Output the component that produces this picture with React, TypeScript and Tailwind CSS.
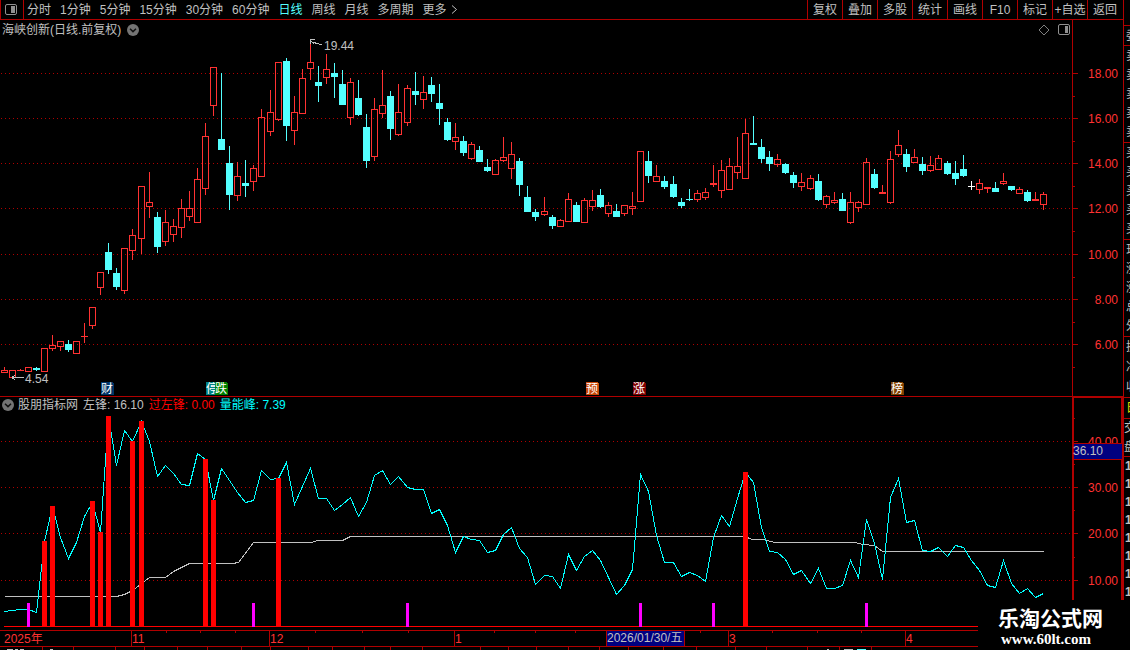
import { useState } from 'react';
import clsx from 'clsx';

type Candle = [kind: 'u' | 'd' | 'x', high: number, top: number, bottom: number, low: number];

const PERIODS = ['分时', '1分钟', '5分钟', '15分钟', '30分钟', '60分钟', '日线', '周线', '月线', '多周期'];
const TOOLS = ['复权', '叠加', '多股', '统计', '画线', 'F10', '标记', '+自选', '返回'];

// u = close above open, d = close below open, x = unchanged
const CANDLES: Candle[] = [
  ['u', 367, 370, 372, 372], ['u', 370, 370, 377, 377], ['u', 369, 370, 370, 370], ['u', 367, 367, 371, 371],
  ['d', 367, 368, 369, 370], ['u', 348, 348, 371, 371], ['u', 335, 345, 348, 350], ['u', 341, 341, 346, 350],
  ['d', 340, 344, 349, 351], ['u', 341, 341, 353, 353], ['u', 323, 336, 336, 342], ['u', 307, 307, 325, 328],
  ['u', 272, 272, 287, 294], ['d', 243, 252, 269, 273], ['d', 268, 273, 286, 289], ['u', 248, 248, 290, 293],
  ['u', 229, 235, 250, 259], ['u', 186, 186, 238, 253], ['u', 172, 202, 206, 217], ['d', 212, 217, 246, 252],
  ['u', 210, 222, 241, 245], ['u', 219, 226, 234, 241], ['u', 199, 208, 227, 237], ['u', 191, 208, 216, 220],
  ['u', 168, 179, 222, 222], ['u', 123, 136, 188, 194], ['u', 67, 67, 105, 115], ['d', 73, 139, 149, 149],
  ['d', 146, 163, 194, 209], ['u', 162, 176, 195, 200], ['d', 160, 183, 185, 196], ['u', 165, 168, 181, 190],
  ['u', 109, 117, 176, 176], ['u', 90, 112, 131, 135], ['u', 62, 62, 119, 120], ['d', 58, 61, 125, 140],
  ['u', 96, 112, 130, 144], ['u', 69, 78, 113, 113], ['u', 42, 62, 68, 79], ['d', 66, 82, 85, 101],
  ['u', 54, 69, 77, 83], ['d', 63, 73, 76, 97], ['d', 70, 84, 104, 104], ['u', 78, 82, 117, 124],
  ['d', 80, 98, 114, 115], ['d', 114, 127, 160, 167], ['u', 98, 109, 156, 160], ['u', 70, 105, 113, 117],
  ['d', 91, 96, 128, 139], ['u', 84, 112, 134, 135], ['u', 85, 88, 122, 125], ['d', 72, 91, 94, 104],
  ['u', 76, 92, 99, 108], ['d', 77, 85, 93, 101], ['d', 84, 103, 108, 124], ['d', 118, 122, 139, 140],
  ['u', 123, 137, 141, 149], ['d', 136, 141, 152, 155], ['u', 142, 144, 158, 159], ['d', 146, 150, 161, 161],
  ['d', 159, 167, 170, 171], ['u', 159, 160, 174, 174], ['u', 137, 157, 160, 161], ['u', 142, 154, 168, 178],
  ['d', 158, 161, 184, 195], ['d', 186, 197, 211, 211], ['d', 209, 212, 216, 220], ['u', 197, 211, 214, 215],
  ['d', 215, 217, 225, 228], ['u', 219, 220, 226, 226], ['u', 193, 199, 221, 221], ['d', 202, 205, 221, 221],
  ['u', 198, 200, 222, 222], ['u', 190, 200, 206, 210], ['d', 189, 195, 206, 207], ['u', 202, 205, 213, 216],
  ['d', 204, 211, 216, 216], ['u', 205, 205, 213, 215], ['u', 192, 206, 208, 214], ['u', 151, 151, 201, 201],
  ['d', 151, 161, 175, 182], ['u', 165, 176, 181, 181], ['d', 176, 181, 186, 188], ['d', 176, 184, 196, 197],
  ['d', 198, 202, 205, 207], ['d', 189, 199, 199, 200], ['u', 190, 193, 199, 201], ['u', 188, 192, 197, 199],
  ['u', 165, 183, 184, 186], ['u', 160, 170, 190, 197], ['u', 158, 166, 189, 189], ['u', 137, 166, 172, 178],
  ['u', 119, 133, 178, 178], ['d', 116, 143, 144, 144], ['d', 139, 147, 158, 162], ['d', 151, 157, 163, 170],
  ['u', 154, 159, 164, 166], ['d', 163, 164, 172, 173], ['d', 172, 175, 182, 187], ['u', 173, 182, 186, 190],
  ['u', 175, 178, 188, 189], ['d', 174, 181, 199, 200], ['u', 195, 196, 204, 207], ['u', 192, 200, 202, 203],
  ['d', 193, 199, 210, 210], ['u', 192, 202, 222, 223], ['u', 201, 202, 207, 211], ['u', 158, 162, 204, 204],
  ['d', 169, 174, 187, 188], ['u', 185, 192, 193, 193], ['u', 151, 159, 202, 203], ['u', 130, 145, 154, 156],
  ['d', 149, 154, 166, 171], ['u', 149, 157, 162, 162], ['d', 157, 164, 170, 174], ['u', 156, 165, 170, 171],
  ['u', 155, 158, 169, 169], ['d', 161, 163, 173, 174], ['d', 161, 173, 178, 184], ['d', 155, 169, 175, 176],
  ['x', 181, 186, 186, 189], ['u', 179, 183, 189, 193], ['u', 187, 187, 188, 192], ['d', 182, 188, 191, 191],
  ['u', 173, 181, 183, 184], ['d', 186, 186, 189, 190], ['u', 187, 189, 193, 193], ['d', 190, 192, 200, 201],
  ['u', 192, 199, 200, 200], ['u', 192, 194, 204, 209],
];

const ENERGY = [
  611, 610, 609, 609, 612, 541, 506, 537, 558, 542, 516, 502, 532, 416, 465, 430, 441, 421, 441, 476,
  465, 473, 484, 485, 453, 459, 500, 468, 480, 492, 502, 500, 470, 479, 478, 462, 504, 486, 468, 498,
  498, 510, 504, 497, 516, 502, 475, 470, 484, 476, 487, 489, 489, 513, 509, 525, 552, 536, 539, 540,
  552, 550, 534, 527, 548, 557, 584, 575, 576, 588, 554, 570, 556, 550, 560, 577, 594, 585, 569, 474,
  491, 535, 562, 562, 576, 572, 575, 581, 537, 515, 526, 498, 472, 482, 527, 551, 552, 559, 574, 570,
  583, 568, 588, 588, 585, 560, 577, 519, 543, 579, 497, 478, 522, 520, 550, 551, 547, 556, 545, 547,
  560, 570, 585, 587, 560, 583, 593, 588, 597, 593,
];

const AVERAGE =
  '4,596 116,596 124,594 132,590 149,577 165,577 173,571 181,567 189,563 232,563 238,562 253,542 311,542 317,540 342,540 350,536 744,536 752,539 763,539 774,542 855,542 862,544 874,545 882,551 1043,551';

const BREAKOUTS = [
  [44, 541], [52, 506], [92, 501], [100, 532], [108, 416], [132, 441],
  [141, 421], [205, 459], [213, 500], [278, 478], [745, 472],
];
const SIGNALS = [28, 253, 407, 640, 713, 866];

const PRICE_TICKS: [number, string][] = [
  [73, '18.00'], [118, '16.00'], [163, '14.00'], [208, '12.00'], [254, '10.00'], [299, '8.00'], [344, '6.00'],
];
const PRICE_MINOR = [96, 141, 186, 231, 277, 322, 367];
const ENERGY_TICKS: [number, string][] = [[441, '40.00'], [487, '30.00'], [533, '20.00'], [580, '10.00']];
const ENERGY_MINOR = [418, 464, 510, 557];

const EVENTS = [
  { x: 206, label: '停', color: '#008080' },
  { x: 215, label: '跌', color: '#008000' },
  { x: 101, label: '财', color: '#003468' },
  { x: 586, label: '预', color: '#c84808' },
  { x: 633, label: '涨', color: '#800000' },
  { x: 891, label: '榜', color: '#804000' },
];

const MONTHS: [number, string][] = [[131, '11'], [269, '12'], [454, '1'], [728, '3'], [905, '4']];
const WEEK_TICKS = [166, 200, 235, 315, 362, 408, 494, 535, 575, 700, 772, 817, 861];
const FOOTER_TICKS = [
  42, 73, 115, 144, 177, 207, 241, 270, 308, 332, 364, 390, 422, 480, 508, 536, 568, 599, 628, 663, 696, 735, 766,
  807, 839, 871,
];

const QUOTE_ROWS = [
  { height: 'h-[20px]', rows: ['委'] },
  { height: 'h-[97px]', rows: ['卖', '卖', '卖', '卖', '卖'] },
  { height: 'h-[97px]', rows: ['买', '买', '买', '买', '买'] },
  { height: 'h-[97px]', rows: ['现', '涨', '涨', '总', '外'] },
  { height: 'h-[61px]', rows: ['换', '净', '收'] },
];

const slotX = (i: number) => Math.floor(4.02 + i * 8.06);

function CandleShape({ candle, x }: { candle: Candle; x: number }) {
  const [kind, high, top, bottom, low] = candle;
  const color = kind === 'u' ? '#ff3232' : kind === 'd' ? '#54ffff' : '#ffffff';
  const hollow = kind === 'u' && bottom - top > 1;
  if (hollow) {
    return (
      <g fill={color}>
        <rect x={x} y={high} width={1} height={top - high} />
        <rect x={x} y={bottom} width={1} height={low - bottom + 1} />
        <rect x={x - 2.5} y={top + 0.5} width={6} height={bottom - top} fill="none" stroke={color} />
      </g>
    );
  }
  return (
    <g fill={color}>
      <rect x={x} y={high} width={1} height={low - high + 1} />
      <rect x={x - 3} y={top} width={7} height={bottom - top + 1} />
    </g>
  );
}

function AxisScale({ ticks, minor }: { ticks: [number, string][]; minor: number[] }) {
  return (
    <g>
      {ticks.map(([y, label]) => (
        <g key={label}>
          <line x1={1} x2={1072} y1={y + 0.5} y2={y + 0.5} stroke="#b00000" strokeDasharray="1 3" />
          <rect x={1073} y={y} width={5} height={1} fill="#b00000" />
          <text x={1118} y={y + 5} textAnchor="end" fill="#ff3232">{label}</text>
        </g>
      ))}
      {minor.map((y) => (
        <rect key={y} x={1073} y={y} width={2} height={1} fill="#b00000" />
      ))}
    </g>
  );
}

function CollapseIcon() {
  return (
    <svg className="size-3" viewBox="0 0 12 12">
      <circle cx="6" cy="6" r="6" fill="#747474" />
      <path d="M3 4.8 L6 7.6 L9 4.8" fill="none" stroke="#111" strokeWidth="1.5" />
    </svg>
  );
}

function PriceChart() {
  return (
    <section className="relative">
      <svg className="block h-auto w-full text-xs" viewBox="0 20 1123 377" shapeRendering="crispEdges">
        <AxisScale ticks={PRICE_TICKS} minor={PRICE_MINOR} />
        <rect x={1072} y={20} width={1} height={377} fill="#b00000" />
        <rect x={0} y={396} width={1123} height={1} fill="#b00000" />
        {CANDLES.map((candle, i) => (
          <CandleShape key={i} candle={candle} x={slotX(i)} />
        ))}

        {/* Highest and lowest price */}
        <g fill="none" stroke="#c0c0c0">
          <path d="M310.5 41.5 L322 45 M315 39.5 H311 L310.5 44 M311 41.5 L314 43.5" />
          <path d="M12 377.5 H24 M12 377.5 L15.5 374.5 M12 377.5 L15.5 380.5" />
        </g>
        <text x={324} y={50} fill="#c0c0c0">19.44</text>
        <text x={25} y={383} fill="#c0c0c0">4.54</text>

        {EVENTS.map((event) => (
          <g key={event.x}>
            <path d={`M${event.x} 382 h11 l2 2 v11 h-13 z`} fill={event.color} />
            <text x={event.x} y={393} fill="#fff">{event.label}</text>
          </g>
        ))}
      </svg>

      <div className="absolute inset-x-0 top-0 flex h-[19px] items-center gap-1.5 pl-0.5">
        <h1>海峡创新(日线.前复权)</h1>
        <button aria-label="展开"><CollapseIcon /></button>
        <div className="ml-auto mr-[53px] flex items-center gap-2">
          <button aria-label="标注">
            <svg className="size-3" viewBox="0 0 12 12" fill="none" stroke="#808080">
              <path d="M6 1 L11 6 L6 11 L1 6 Z" />
            </svg>
          </button>
          <button aria-label="右侧栏">
            <svg className="size-3" viewBox="0 0 12 12">
              <rect x="0.5" y="0.5" width="11" height="10" rx="1.5" fill="none" stroke="#909090" />
              <rect x="7" y="2" width="3" height="7" fill="#909090" />
            </svg>
          </button>
        </div>
      </div>
    </section>
  );
}

function EnergyChart() {
  const energyPoints = ENERGY.map((y, i) => `${slotX(i) + 0.5},${y + 0.5}`).join(' ');

  return (
    <section className="relative">
      <svg className="block h-auto w-full text-xs" viewBox="0 397 1123 253" shapeRendering="crispEdges">
        <AxisScale ticks={ENERGY_TICKS} minor={ENERGY_MINOR} />
        <path d="M1073 600 V397 H1122 V600" fill="none" stroke="#b00000" strokeWidth={2} />

        <polyline points={AVERAGE} transform="translate(0.5 0.5)" fill="none" stroke="#c0c0c0" />
        <polyline points={energyPoints} fill="none" stroke="#00ffff" />
        {BREAKOUTS.map(([x, y]) => (
          <rect key={x} x={x - 2} y={y} width={5} height={627 - y} fill="#ff0000" />
        ))}
        <rect x={4} y={626} width={974} height={1} fill="#ff0000" />
        {SIGNALS.map((x) => (
          <rect key={x} x={x - 1} y={603} width={3} height={24} fill="#ff00ff" />
        ))}

        {/* Cursor value */}
        <rect x={1074} y={443} width={48} height={17} fill="#b00000" />
        <rect x={1074} y={444} width={48} height={15} fill="#000080" />
        <text x={1073} y={455} fill="#c0c0c0">36.10</text>

        {/* Time axis */}
        <g fill="#b00000">
          <rect x={0} y={630} width={978} height={1} />
          <rect x={0} y={646} width={978} height={1} />
          {WEEK_TICKS.map((x) => <rect key={x} x={x} y={631} width={1} height={2} />)}
          {FOOTER_TICKS.map((x) => <rect key={x} x={x} y={647} width={1} height={3} />)}
        </g>
        <text x={4} y={643} fill="#ff3232">2025年</text>
        {MONTHS.map(([x, label]) => (
          <g key={x}>
            <rect x={x} y={631} width={1} height={15} fill="#b00000" />
            <text x={x + 1} y={643} fill="#ff3232">{label}</text>
          </g>
        ))}
        <rect x={606} y={630} width={79} height={17} fill="#b00000" />
        <rect x={607} y={631} width={77} height={15} fill="#000080" />
        <text x={607} y={642} fill="#c0c0c0">2026/01/30/五</text>
        <path d="M7 649.5 H13 M15 649.5 H18 M20 649.5 H24 M50 649.5 H53 M827 649.5 H829 M844 649.5 H853" stroke="#c0c0c0" />
        <path d="M857 649.5 H866" stroke="#54ffff" />
      </svg>

      <div className="absolute inset-x-0 top-0 flex h-4 items-center gap-[5px] pl-0.5">
        <div className="flex items-center gap-1">
          <button aria-label="收起"><CollapseIcon /></button>
          <span>股朋指标网</span>
        </div>
        <span>左锋: 16.10</span>
        <span className="text-[#ff0000]">过左锋: 0.00</span>
        <span className="text-[#00ffff]">量能峰: 7.39</span>
      </div>
    </section>
  );
}

function QuoteStrip() {
  return (
    <aside className="w-[7px] shrink-0 overflow-hidden border-l border-[#b00000] pt-[25px]">
      {QUOTE_ROWS.map((group, i) => (
        <div
          key={i}
          className={clsx('flex w-5 flex-col justify-around border-t border-[#b00000] pl-0.5 leading-4', group.height)}
        >
          {group.rows.map((row, j) => <span key={j}>{row}</span>)}
        </div>
      ))}
      <div className="h-[21px] w-5 border-t border-[#b00000] pl-0.5 leading-5 text-[#e0e000]">日</div>
      <div className="flex h-[38px] w-5 flex-col justify-around border-t border-[#b00000] leading-4">
        <span>交</span>
        <span>盘</span>
      </div>
      <div className="flex w-5 flex-col border-t border-[#b00000] pl-px font-bold leading-[18px]">
        {Array.from({ length: 8 }, (_, i) => <span key={i}>1</span>)}
      </div>
    </aside>
  );
}

export default function App() {
  const [period, setPeriod] = useState('日线');

  return (
    <div className="relative flex min-h-screen overflow-hidden bg-black font-['Liberation_Sans','Noto_Sans_CJK_SC',sans-serif] text-xs text-[#c0c0c0]">
      <main className="min-w-0 flex-1">
        <header className="flex h-5 items-stretch border-b border-[#b00000] leading-none whitespace-nowrap">
          <button className="flex w-6 shrink-0 items-center border-x border-[#b00000] pl-1" aria-label="左侧栏">
            <svg className="h-3 w-[13px]" viewBox="0 0 13 12">
              <rect x="0.5" y="0.5" width="11" height="10" rx="1.5" fill="none" stroke="#909090" />
              <rect x="6" y="2" width="4" height="7" fill="#909090" />
            </svg>
          </button>
          <nav className="flex items-center gap-[9px] pl-[3px]">
            {PERIODS.map((name) => (
              <button key={name} onClick={() => setPeriod(name)} className={clsx(period === name && 'text-[#54ffff]')}>
                {name}
              </button>
            ))}
            <button className="flex items-center gap-1">
              更多
              <svg className="h-[9px] w-[7px]" viewBox="0 0 7 9" fill="none" stroke="#c0c0c0">
                <path d="M1 0.5 L5.5 4.5 L1 8.5" />
              </svg>
            </button>
          </nav>
          <div className="ml-auto flex pr-px">
            {TOOLS.map((tool) => (
              <button key={tool} className="w-[35px] border-l border-[#b00000] text-center">{tool}</button>
            ))}
          </div>
        </header>
        <PriceChart />
        <EnergyChart />
      </main>
      <QuoteStrip />

      <div className="absolute right-0 bottom-0 h-[50px] w-[152px] bg-black pt-2 pl-5 text-white">
        <p className="text-[21px] leading-[22px] font-bold">乐淘公式网</p>
        <p className="pl-[3px] font-['Liberation_Serif',serif] text-[15px] leading-[18px] font-bold">www.60lt.com</p>
      </div>
    </div>
  );
}
